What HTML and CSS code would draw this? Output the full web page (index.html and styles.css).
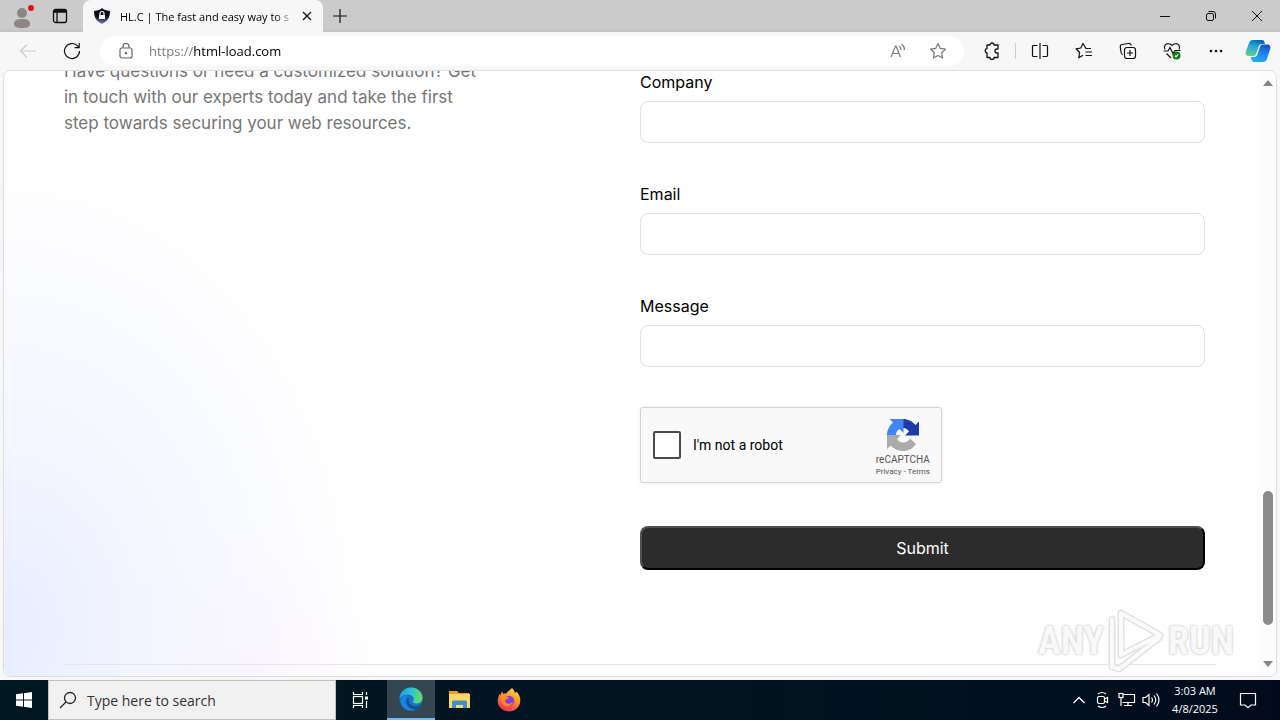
FILE: index.html
```html
<!DOCTYPE html>
<html lang="en">
<head>
  <meta charset="UTF-8">
  <title>HL.C | The fast and easy way to secure</title>
  <link rel="stylesheet" href="styles.css">
</head>
<body>
  <header class="tab-bar">
    <button class="profile" aria-label="Profile">
      <svg width="28" height="28" viewBox="0 0 28 28"><circle cx="13" cy="11" r="5" fill="#8c8684"/><path d="M5 22c0-4 3-5 8-5s8 1 8 5c0 3-3 4-8 4s-8-1-8-4z" fill="#8c8684"/><circle cx="22" cy="6" r="3" fill="#e3101c"/></svg>
    </button>
    <button class="tab-actions" aria-label="Tab actions">
      <svg width="16" height="16" viewBox="0 0 16 16" fill="none" stroke="#111" stroke-width="1.3"><rect x="1.5" y="1.5" width="13" height="13" rx="2"/><path d="M1.5 4h13M5 4v10.500" /><path d="M2 3h12" stroke-width="2"/></svg>
    </button>
    <div class="tab">
      <svg width="18" height="18" viewBox="0 0 18 18"><defs><linearGradient id="shield" x1="0" y1="0" x2="0" y2="1"><stop offset=".5" stop-color="#0d0d18"/><stop offset="1" stop-color="#7d7bd0"/></linearGradient></defs><path d="M9 1c2 2 4 2 8 3 0 6-2 10-8 13C3 14 1 10 1 4c4-1 6-1 8-3z" fill="url(#shield)"/><rect x="6" y="8" width="6" height="4" rx=".5" fill="#fff"/><path d="M7 8V6.500a2 2 0 0 1 4 0V8" fill="none" stroke="#fff" stroke-width="1.200"/></svg>
      <span class="tab-title">HL.C | The fast and easy way to s</span>
      <button class="tab-close" aria-label="Close tab">
        <svg width="10" height="10" viewBox="0 0 10 10" stroke="#111" stroke-width="1.300"><path d="M1 1l8 8M9 1L1 9"/></svg>
      </button>
    </div>
    <button class="new-tab" aria-label="New tab">
      <svg width="14" height="14" viewBox="0 0 14 14" stroke="#111" stroke-width="1.200"><path d="M7 0v14M0 7h14"/></svg>
    </button>
    <div class="window-controls">
      <button aria-label="Minimize"><svg width="10" height="10" viewBox="0 0 10 10" stroke="#111"><path d="M0 5.500h10"/></svg></button>
      <button aria-label="Restore"><svg width="12" height="12" viewBox="0 0 12 12" fill="none" stroke="#111"><rect x="1.500" y="3.500" width="7" height="7" rx="1.500"/><path d="M3.500 1.500h4.500a2.500 2.500 0 0 1 2.500 2.500v4.500"/></svg></button>
      <button aria-label="Close"><svg width="12" height="12" viewBox="0 0 12 12" stroke="#111"><path d="M1 1l10 10M11 1L1 11"/></svg></button>
    </div>
  </header>

  <nav class="toolbar">
    <button class="nav-btn" aria-label="Back"><svg width="18" height="16" viewBox="0 0 18 16" fill="none" stroke="#ccc" stroke-width="1.200"><path d="M17 8H2M8 1.500L1.500 8 8 14.500"/></svg></button>
    <button class="nav-btn" aria-label="Refresh"><svg width="18" height="18" viewBox="0 0 18 18" fill="none" stroke="#111" stroke-width="1.200"><path d="M16.500 9a7.500 7.500 0 1 1-2.200-5.300L16 5.500"/><path d="M16.200 1v4.700h-4.700"/></svg></button>
    <div class="address">
      <svg width="14" height="16" viewBox="0 0 14 16" fill="none" stroke="#666" stroke-width="1.200"><rect x="1" y="5" width="12" height="10" rx="2"/><path d="M4 5V3.500a3 3 0 0 1 6 0V5"/><circle cx="7" cy="10" r=".6" fill="#666"/></svg>
      <input class="url" type="text" value="https://html-load.com" aria-label="Address">
      <button aria-label="Read aloud"><svg width="18" height="16" viewBox="0 0 18 16" fill="none" stroke="#777" stroke-width="1.200"><path d="M2 14L6.500 3h.5l4.500 11M3.500 10.500h6.500M10 3c1.500.7 2 2 2 4M12.500 1.200c2.200 1.400 3 3.300 3 5.800"/></svg></button>
      <button aria-label="Add to favorites"><svg width="18" height="18" viewBox="0 0 18 18" fill="none" stroke="#777" stroke-width="1.200" stroke-linejoin="round"><path d="M9 1.500l2.300 4.900 5.200.7-3.800 3.700.9 5.300L9 13.500l-4.600 2.600.9-5.300L1.500 7.100l5.200-.7z"/></svg></button>
    </div>
    <div class="tools">
      <button aria-label="Extensions"><svg width="18" height="18" viewBox="0 0 18 18" fill="none" stroke="#111" stroke-width="1.300" stroke-linejoin="round"><path d="M4 3h3a2 2 0 0 1 4 0h4v4h-1a2 2 0 0 0 0 4h1v4.500h-4a2 2 0 0 1-4 0H4V11a2.300 2.300 0 0 1 0-4.500z"/></svg></button>
      <span class="divider"></span>
      <button aria-label="Split screen"><svg width="18" height="18" viewBox="0 0 18 18" fill="none" stroke="#111" stroke-width="1.200"><path d="M9 1v16M6.500 3.500h-4a1 1 0 0 0-1 1v9a1 1 0 0 0 1 1h4M11.500 3.500h4a1 1 0 0 1 1 1v9a1 1 0 0 1-1 1h-4"/></svg></button>
      <button aria-label="Favorites"><svg width="18" height="18" viewBox="0 0 18 18" fill="none" stroke="#111" stroke-width="1.200" stroke-linejoin="round"><path d="M16 6.500h-5L8 1.500 5.800 6 1 6.800l3.600 3.500-.8 5.500L8 13.300M10.500 10H17M10.500 13.500H17"/></svg></button>
      <button aria-label="Collections"><svg width="18" height="18" viewBox="0 0 18 18" fill="none" stroke="#111" stroke-width="1.200"><rect x="5.500" y="5.500" width="11" height="11" rx="2.500"/><path d="M11 8v6M8 11h6M4 12.500c-1.500 0-1.800-1-2-2L1.300 5c-.2-1.400.4-2.300 1.700-2.500l6.500-1c1.500-.2 2.500.4 2.800 2"/></svg></button>
      <button aria-label="Browser essentials"><svg width="18" height="18" viewBox="0 0 18 18" fill="none" stroke="#111" stroke-width="1.200"><path d="M2 7.500C.2 4 3 1.500 5.500 1.700c1.700 0 2.700.8 3.500 1.800.8-1 1.800-1.800 3.500-1.800C15 1.500 17.800 4 16 7.500M.5 9H5l2-3.500 3 6L12 8.500h5.500M3.500 11.500L8 16"/><circle cx="13.500" cy="13.500" r="4" fill="#107c10" stroke="none"/><path d="M11.800 13.800l1.200 1 2.200-2.500" stroke="#fff"/></svg></button>
      <button aria-label="Settings and more"><svg width="18" height="18" viewBox="0 0 18 18" fill="#111"><circle cx="4" cy="9" r="1.300"/><circle cx="9" cy="9" r="1.300"/><circle cx="14" cy="9" r="1.300"/></svg></button>
      <button class="copilot" aria-label="Copilot"><svg width="26" height="24" viewBox="0 0 26 24"><defs><linearGradient id="copA" x1=".6" y1="0" x2=".3" y2="1"><stop offset="0" stop-color="#0c64ae"/><stop offset=".4" stop-color="#21a7dc"/><stop offset="1" stop-color="#63d18d"/></linearGradient><linearGradient id="copB" x1=".6" y1="0" x2=".3" y2="1"><stop offset="0" stop-color="#1755c8"/><stop offset=".5" stop-color="#2484f4"/><stop offset="1" stop-color="#20b3f2"/></linearGradient></defs><path d="M8 1h9c2 0 2.500 2 3 4h-3c-2 0-3 1-3.500 3L11 15c-.5 1.500-1.500 2-3 2H4c-3 0-4-2-3-5L4 4c.7-2 2-3 4-3z" fill="url(#copA)"/><path d="M18 23H9c-2 0-2.500-2-3-5h3c2 0 3-1 3.500-3L15 8c.5-2 1.500-2.500 3-2.500h4c3 0 4 2 3 5L22 20c-.7 2-2 3-4 3z" fill="url(#copB)"/></svg></button>
    </div>
  </nav>

  <div class="viewport">
    <main class="page">
      <section class="contact">
        <p class="intro">Have questions or need a customized solution? Get in touch with our experts today and take the first step towards securing your web resources.</p>
        <form class="contact-form">
          <div class="field">
            <label for="company">Company</label>
            <input type="text" id="company">
          </div>
          <div class="field">
            <label for="email">Email</label>
            <input type="email" id="email">
          </div>
          <div class="field">
            <label for="message">Message</label>
            <input type="text" id="message">
          </div>
          <div class="captcha">
            <input type="checkbox" id="robot">
            <label for="robot">I'm not a robot</label>
            <div class="captcha-brand">
              <svg width="32" height="32" viewBox="0 0 64 64"><path d="M64 32V5l-7 7C51 5 42 0 32 0v18c6 0 9 3 12 7l-8 8h28z" fill="#1c3aa9"/><path d="M32 0H5l7 7C5 13 0 22 0 32h18c0-6 3-10 7-12l8 8V0z" fill="#4285f4"/><path d="M0 32v28l7-7c6 7 15 11 25 11 11 0 20-5 26-14L46 39c-3 5-7 8-14 8-5 0-9-3-12-7l8-8z" fill="#ababab"/></svg>
              <span class="captcha-name">reCAPTCHA</span>
              <span class="captcha-links"><a href="#">Privacy</a> - <a href="#">Terms</a></span>
            </div>
          </div>
          <button class="submit" type="submit">Submit</button>
        </form>
      </section>
      <hr class="rule">
    </main>
    <div class="scrollbar">
      <svg width="10" height="6" viewBox="0 0 10 6"><path d="M0 6l5-6 5 6z" fill="#858585"/></svg>
      <div class="track"><div class="thumb"></div></div>
      <svg width="10" height="6" viewBox="0 0 10 6"><path d="M0 0l5 6 5-6z" fill="#858585"/></svg>
    </div>
    <div class="watermark">
      <span>ANY</span>
      <svg width="56" height="64" viewBox="0 0 56 64" fill="none" stroke-linejoin="round" stroke-linecap="round"><g stroke="#e2e2e2" stroke-width="7"><path d="M13 4v42l39-20zM4 10v48l7 2 40-31"/></g><g stroke="#fafafa" stroke-width="4"><path d="M13 4v42l39-20zM4 10v48l7 2 40-31"/></g></svg>
      <span>RUN</span>
    </div>
  </div>

  <footer class="taskbar">
    <button class="task start" aria-label="Start"><svg width="16" height="16" viewBox="0 0 16 16" fill="#fff"><path d="M0 2.300L7 1.300v6.200H0zM8 1.200L16 0v7.500H8zM0 8.500h7v6.200l-7-1zM8 8.500h8V16l-8-1.200z"/></svg></button>
    <div class="search">
      <svg width="18" height="18" viewBox="0 0 18 18" fill="none" stroke="#222" stroke-width="1.300"><circle cx="11" cy="7" r="5.500"/><path d="M7 11l-6 6"/></svg>
      <input type="text" placeholder="Type here to search" aria-label="Type here to search">
    </div>
    <button class="task" aria-label="Task view"><svg width="18" height="18" viewBox="0 0 18 18" fill="none" stroke="#fff" stroke-width="1.200"><path d="M1.500 1v2.500h9V1M1.500 17v-2.500h9V17M14.500 1v3M14.500 10v7"/><rect x="1.500" y="5.500" width="9" height="7"/><path d="M13 7h3" stroke-width="3"/></svg></button>
    <button class="task active" aria-label="Edge"><svg width="24" height="24" viewBox="0 0 24 24"><defs><linearGradient id="edgeTop" x1="0" y1=".3" x2="1" y2=".5"><stop offset="0" stop-color="#1f9fe0"/><stop offset=".5" stop-color="#33c3d0"/><stop offset="1" stop-color="#65dc62"/></linearGradient></defs><circle cx="12" cy="12" r="11.500" fill="#1674c9"/><path d="M.6 12C.8 5 6 .5 12 .5c7 0 11.500 5 11.500 10 0 4-3 6-6 6-2.500 0-4-1-3.500-2 2-3 0-7-5-7-4 0-7.500 1.500-8.400 4.500z" fill="url(#edgeTop)"/><path d="M9 8.500c-3 2-3.500 6-1.500 9.500 2 3.500 5.500 5 9 4.500-3 1.500-8 1.500-11.500-1.500C1 17.500 1 11 5 8.800c1.500-.6 3-.7 4-.3z" fill="#1a87dc"/><path d="M10 10.500c-1.500 3 0 7.500 4.500 8.500 3 .7 5.500-.3 7.500-1.500-1.500 2.500-3 4-5.500 5C11 22.500 7 18 7.500 14c.2-2 1.200-3 2.500-3.500z" fill="#124f9b"/></svg></button>
    <button class="task" aria-label="File Explorer"><svg width="22" height="20" viewBox="0 0 22 20"><path d="M0 1h8l2 2h10v5H0z" fill="#e8a317"/><path d="M0 4h21v14H0z" fill="#ffd667"/><path d="M3 18v-6q0-1.500 1.500-1.500h12q1.500 0 1.500 1.500v6h-4v-3H7v3z" fill="#3c91c9"/></svg></button>
    <button class="task" aria-label="Firefox"><svg width="24" height="24" viewBox="0 0 24 24"><defs><linearGradient id="fox" x1=".8" y1="0" x2=".3" y2="1"><stop offset="0" stop-color="#ffe33a"/><stop offset=".45" stop-color="#ff9328"/><stop offset="1" stop-color="#f5245a"/></linearGradient></defs><path d="M15 0c2 2 2.500 3.500 3 5 1-.3 1.200-1 1.200-1.500C22 6 23.500 9 23.300 13c-.4 6-5.300 10.500-11.300 10.500S.7 19 .7 13c0-3 1-5.500 2.300-7.500V8l2-4.500L6.500 6c1-.5 2-.5 3-.4C10.500 3 13 2.500 15 0z" fill="url(#fox)"/><circle cx="12" cy="13" r="5.200" fill="#8140d8"/><path d="M4 8c3-1.500 6 .5 8 1.500-1 2-4 1.500-4 3.500 0 3 5 4 8 1-1 5-9 5.500-11 1-1-2.500-1.200-5-1-7z" fill="#ff8a22"/></svg></button>
    <div class="tray">
      <button aria-label="Show hidden icons"><svg width="14" height="8" viewBox="0 0 14 8" fill="none" stroke="#fff" stroke-width="1.300"><path d="M1.500 7L7 1.500 12.500 7"/></svg></button>
      <button aria-label="Meet now"><svg width="14" height="18" viewBox="0 0 14 18" fill="none" stroke="#fff" stroke-width="1.200"><rect x="1.500" y="5.500" width="7" height="7" rx="1.500"/><path d="M8.500 8l3-1.500v5l-3-1.500M2 3q4-3 8 0M2 15q4 3 8 0"/></svg></button>
      <button aria-label="Network"><svg width="18" height="16" viewBox="0 0 18 16" fill="none" stroke="#fff" stroke-width="1.200"><path d="M5.500 2.500h11v8H4.500M10 10.500v3M6 13.500h8M3 6v8"/><rect x="1" y="1.500" width="4" height="4"/></svg></button>
      <button aria-label="Volume"><svg width="18" height="16" viewBox="0 0 18 16" fill="none" stroke="#fff" stroke-width="1.200"><path d="M1 5.500h2.500L7 2.500v11L3.500 10.500H1zM9.500 5.500q2 2.500 0 5M12 3.500q3.500 4.500 0 9M14.500 1.500q5 6.500 0 13"/></svg></button>
      <div class="clock"><span>3:03 AM</span><span>4/8/2025</span></div>
      <button class="notes" aria-label="Notifications"><svg width="18" height="18" viewBox="0 0 18 18" fill="none" stroke="#fff" stroke-width="1.200"><path d="M1.500 2.500h15v11.500H12L9 16.800 6 14H1.500z"/></svg></button>
    </div>
  </footer>
</body>
</html>
```

FILE: styles.css
```css
* {
  box-sizing: border-box;
}

body {
  margin: 0;
  height: 100vh;
  display: flex;
  flex-direction: column;
  overflow: hidden;
  background: #f7f7f7;
  font-family: "Open Sans", "Noto Sans", sans-serif;
  color: #000;
}

button {
  display: flex;
  align-items: center;
  justify-content: center;
  padding: 0;
  border: 0;
  background: none;
  font: inherit;
  color: inherit;
}

svg {
  flex: none;
  display: block;
}

/* tab strip */
.tab-bar {
  flex: none;
  height: 32px;
  display: flex;
  background: linear-gradient(#cbcbcb 28px, #c2c2c2);
}

.profile {
  width: 44px;
  padding-left: 2px;
}

.tab-actions {
  width: 32px;
}

.tab {
  width: 240px;
  margin-left: 7px;
  padding: 0 10px;
  display: flex;
  align-items: center;
  gap: 9px;
  background: #f7f7f7;
  border-radius: 8px 8px 0 0;
}

.tab-title {
  flex: 1;
  white-space: nowrap;
  font-size: 11px;
  mask-image: linear-gradient(90deg, #000 155px, transparent 175px);
}

.tab-close {
  width: 12px;
}

.new-tab {
  width: 34px;
}

.window-controls {
  margin-left: auto;
  display: flex;
}

.window-controls button {
  width: 46px;
}

/* toolbar */
.toolbar {
  flex: none;
  height: 38px;
  padding: 0 9px 0 6px;
  display: flex;
  align-items: center;
}

.nav-btn {
  width: 44px;
  height: 30px;
}

.address {
  flex: 1;
  height: 30px;
  margin-left: 6px;
  padding: 0 17px 0 19px;
  display: flex;
  align-items: center;
  gap: 22px;
  background: #fff;
  border-radius: 15px;
}

.url {
  flex: 1;
  min-width: 0;
  margin-left: -6px;
  padding: 0;
  border: 0;
  outline: 0;
  font: 13px "Open Sans", "Noto Sans", sans-serif;
  color: transparent;
  background: linear-gradient(90deg, #767676 45px, #000 45px);
  -webkit-background-clip: text;
  background-clip: text;
}

.tools {
  display: flex;
  align-items: center;
  margin-left: 6px;
}

.tools button {
  width: 44px;
  height: 30px;
}

.divider {
  width: 1px;
  height: 16px;
  margin: 0 2px 0 1px;
  background: #ccc;
}

.tools .copilot {
  width: 26px;
  margin-left: 7px;
}

/* web page */
.viewport {
  flex: 1;
  min-height: 0;
  margin: 0 3px 3px;
  display: flex;
  position: relative;
  overflow: hidden;
  border: 1px solid #dedede;
  border-radius: 8px;
  background: #fff;
}

.page {
  flex: 1;
  padding: 0 44px 0 60px;
  background:
    radial-gradient(ellipse 370px 470px at 0 92%, rgba(230, 236, 255, 0.95), rgba(240, 243, 255, 0.75) 40%, transparent),
    radial-gradient(circle at 230px 100%, rgba(255, 240, 252, 0.6), transparent 150px),
    #fff;
  font-family: Inter, sans-serif;
}

.contact {
  display: grid;
  grid-template-columns: 1fr 1fr;
}

.intro {
  max-width: 420px;
  margin: -13px 0 0;
  font-size: 17px;
  line-height: 26px;
  color: #757575;
}

.contact-form {
  padding-right: 11px;
}

.field {
  display: flex;
  flex-direction: column;
  gap: 8px;
  margin-bottom: 40px;
}

.field label {
  font-size: 16px;
  line-height: 22px;
}

.field input {
  height: 42px;
  padding: 0 12px;
  border: 1px solid #dfdfdf;
  border-radius: 8px;
  background: #fff;
  font: 16px Inter, sans-serif;
}

.captcha {
  width: 302px;
  height: 76px;
  margin-bottom: 43px;
  padding: 0 11px 0 12px;
  display: flex;
  align-items: center;
  gap: 12px;
  background: #f9f9f9;
  border: 1px solid #d3d3d3;
  border-radius: 3px;
  box-shadow: 0 0 4px rgba(0, 0, 0, 0.08);
}

.captcha input {
  appearance: none;
  width: 28px;
  height: 28px;
  margin: 0;
  border: 2px solid #4a4a4a;
  border-radius: 2px;
  background: #fff;
}

.captcha label {
  font: 14px Roboto, sans-serif;
}

.captcha-brand {
  margin-left: auto;
  display: flex;
  flex-direction: column;
  align-items: center;
  padding-top: 6px;
  font-family: Roboto, sans-serif;
  color: #555;
}

.captcha-name {
  margin-top: 2px;
  font-size: 10px;
  line-height: 14px;
}

.captcha-links {
  font-size: 8px;
  line-height: 10px;
}

.captcha-links a {
  color: inherit;
  text-decoration: none;
}

.submit {
  width: 100%;
  height: 44px;
  border: 2px outset #4d4d4d;
  border-color: #505050 #000 #000 #505050;
  border-radius: 8px;
  background: #2c2c2c;
  color: #fff;
  font-size: 16px;
}

.rule {
  margin: 94px 0 0;
  border: 0;
  border-top: 1px solid #e6e6e6;
}

.scrollbar {
  width: 16px;
  padding: 9px 3px 9px;
  display: flex;
  flex-direction: column;
  align-items: center;
  background: #fcfcfc;
}

.track {
  flex: 1;
  width: 10px;
  margin: 4px 0;
  display: flex;
  flex-direction: column;
  justify-content: flex-end;
  padding-bottom: 32px;
}

.thumb {
  height: 134px;
  border-radius: 5px;
  background: #8b8b8b;
}

.watermark {
  position: absolute;
  right: 42px;
  bottom: 3px;
  display: flex;
  align-items: center;
  gap: 4px;
  font: bold 38px "Liberation Sans Narrow", "Roboto Condensed", Roboto, sans-serif;
  color: #f8f8f8;
  text-shadow: 0 0 3px #c8c8c8, 0 0 2px #d4d4d4;
}

/* taskbar */
.taskbar {
  flex: none;
  height: 40px;
  display: flex;
  background: linear-gradient(90deg, #001722, #001420 60%, #020b1c);
  color: #fff;
}

.task {
  width: 49px;
}

.task.start {
  width: 48px;
}

.task.active {
  width: 48px;
  margin-left: 2px;
  background: #34464f;
  border-bottom: 2px solid #76b9ed;
}

.search {
  width: 288px;
  padding: 0 10px;
  display: flex;
  align-items: center;
  gap: 10px;
  background: #f1f1f1;
  border: 1px solid #c0c0c0;
}

.search input {
  flex: 1;
  min-width: 0;
  padding: 0;
  border: 0;
  background: none;
  font: 14px "Open Sans", "Noto Sans", sans-serif;
}

.search input::placeholder {
  color: #333;
}

.tray {
  margin-left: auto;
  display: flex;
  align-items: center;
}

.tray button {
  width: 24px;
  height: 40px;
}

.clock {
  width: 64px;
  display: flex;
  flex-direction: column;
  align-items: center;
  font-size: 11px;
  line-height: 18px;
}

.tray .notes {
  width: 41px;
  margin-right: 12px;
}
```
